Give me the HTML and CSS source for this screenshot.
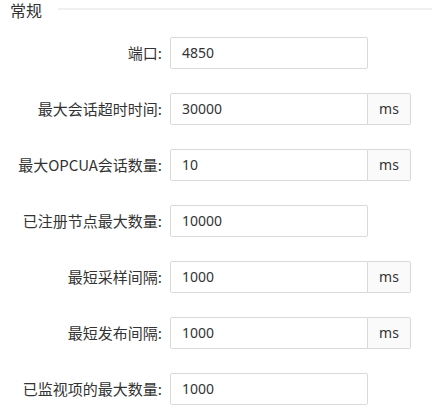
FILE: index.html
```html
<!DOCTYPE html>
<html lang="zh">
<head>
<meta charset="utf-8">
<link rel="stylesheet" href="styles.css">
</head>
<body>
<div class="section-head">
  <span class="section-title">常规</span>
  <span class="section-line"></span>
</div>
<form class="form">
  <div class="row">
    <label class="label">端口:</label>
    <div class="field"><span class="input">4850</span></div>
  </div>
  <div class="row">
    <label class="label">最大会话超时时间:</label>
    <div class="field"><span class="input">30000</span><span class="addon">ms</span></div>
  </div>
  <div class="row">
    <label class="label">最大OPCUA会话数量:</label>
    <div class="field"><span class="input">10</span><span class="addon">ms</span></div>
  </div>
  <div class="row">
    <label class="label">已注册节点最大数量:</label>
    <div class="field"><span class="input">10000</span></div>
  </div>
  <div class="row">
    <label class="label">最短采样间隔:</label>
    <div class="field"><span class="input">1000</span><span class="addon">ms</span></div>
  </div>
  <div class="row">
    <label class="label">最短发布间隔:</label>
    <div class="field"><span class="input">1000</span><span class="addon">ms</span></div>
  </div>
  <div class="row">
    <label class="label">已监视项的最大数量:</label>
    <div class="field"><span class="input">1000</span></div>
  </div>
</form>
</body>
</html>
```
FILE: styles.css
```css
html, body {
  margin: 0;
  padding: 0;
  background: #fff;
}
body {
  font-family: "Noto Sans CJK SC", "Noto Sans", sans-serif;
  color: #333;
  font-size: 14px;
}
.section-head {
  display: flex;
  align-items: center;
  height: 20px;
  padding-left: 10px;
}
.section-title {
  font-size: 16px;
  line-height: 20px;
  color: #333;
}
.section-line {
  flex: 1;
  height: 2px;
  background: #f0f0f0;
  margin-left: 16px;
  margin-top: -3px;
}
.form {
  margin: 17px 0 0 0;
  display: flex;
  flex-direction: column;
  gap: 24px;
}
.row {
  display: flex;
  align-items: center;
  height: 32px;
}
.label {
  text-align: right;
  padding-right: 8px;
  box-sizing: border-box;
  width: 170px;
  font-size: 15px;
  line-height: 20px;
  color: #333;
  white-space: nowrap;
}
.field {
  display: flex;
  height: 32px;
}
.input {
  width: 198px;
  box-sizing: border-box;
  height: 32px;
  border: 1px solid #d9d9d9;
  border-radius: 2px;
  padding: 0 11px;
  line-height: 30px;
  font-family: "Noto Sans", "Noto Sans CJK SC", sans-serif;
  font-size: 14px;
  color: #333;
  background: #fff;
}
.field .input:not(:last-child) {
  border-top-right-radius: 0;
  border-bottom-right-radius: 0;
}
.addon {
  width: 43px;
  box-sizing: border-box;
  height: 32px;
  border: 1px solid #d9d9d9;
  border-left: 0;
  border-radius: 0 2px 2px 0;
  background: #fafafa;
  text-align: center;
  line-height: 30px;
  font-family: "Noto Sans", sans-serif;
  font-size: 14px;
  color: #333;
}
```
